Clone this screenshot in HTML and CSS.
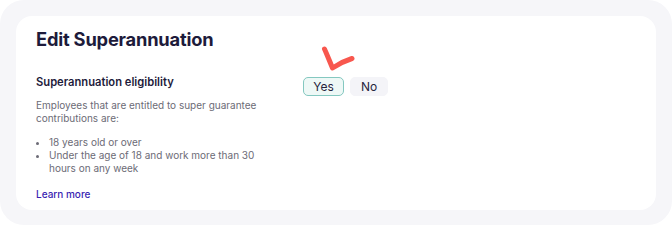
FILE: index.html
```html
<!DOCTYPE html>
<html lang="en">
<head>
<meta charset="utf-8">
<title>Edit Superannuation</title>
<link rel="stylesheet" href="styles.css">
</head>
<body>
<div class="frame">
  <section class="card">
    <h1 class="title">Edit Superannuation</h1>
    <div class="row">
      <div class="info">
        <h2 class="subtitle">Superannuation eligibility</h2>
        <p class="desc">Employees that are entitled to super guarantee contributions are:</p>
        <ul class="list">
          <li>18 years old or over</li>
          <li>Under the age of 18 and work more than 30 hours on any week</li>
        </ul>
        <a class="link" href="#">Learn more</a>
      </div>
      <div class="choice">
        <svg class="check" width="36" height="28" viewBox="0 0 36 28" aria-hidden="true">
          <path d="M3.5 3 C6 8.5 8.5 15 11.5 22 C16 19 23 15 31 12.5" fill="none" stroke="#f8574e" stroke-width="5" stroke-linecap="round" stroke-linejoin="round"/>
        </svg>
        <button class="opt opt-on" type="button">Yes</button>
        <button class="opt" type="button">No</button>
      </div>
    </div>
  </section>
</div>
</body>
</html>
```

FILE: styles.css
```css
* { box-sizing: border-box; }
html, body { margin: 0; background: #ffffff; }
body { font-family: Inter, "Noto Sans", sans-serif; color: #1d1b3b; }

.frame {
  width: 672px;
  height: 225px;
  padding: 16px;
  background: #f6f6f9;
  border-radius: 24px;
}

.card {
  height: 194px;
  background: #ffffff;
  border-radius: 16px;
  padding: 12px 20px 0;
}

.title {
  margin: 0;
  font-size: 18.3px;
  line-height: 22px;
  font-weight: 700;
  letter-spacing: -0.2px;
  color: #1d1b3b;
}

.row {
  display: flex;
  margin-top: 25px;
}

.info { width: 240px; }

.subtitle {
  margin: 0;
  font-size: 11.2px;
  line-height: 14px;
  font-weight: 600;
  color: #1d1b3b;
}

.desc {
  margin: 10px 0 0;
  font-size: 10px;
  line-height: 13px;
  color: #6c6b76;
}

.list {
  margin: 11px 0 0;
  padding-left: 13px;
  font-size: 10px;
  line-height: 13px;
  color: #6c6b76;
}

.link {
  display: block;
  margin-top: 13px;
  font-size: 10px;
  line-height: 13px;
  color: #3a1fb2;
  text-decoration: none;
  font-weight: 500;
}

.choice {
  position: relative;
  display: flex;
  gap: 6px;
  margin-left: 27px;
  margin-top: 2px;
  align-items: flex-start;
}

.check {
  position: absolute;
  left: 18px;
  top: -31px;
}

.opt {
  font-family: inherit;
  height: 19px;
  padding: 0 10px;
  font-size: 12px;
  line-height: 17px;
  font-weight: 400;
  color: #27253d;
  background: #f4f4f8;
  border: 1px solid #f4f4f8;
  border-radius: 5px;
}

.opt-on {
  width: 41px;
  padding: 0;
  background: #eef8f6;
  border-color: #84c8c0;
}
```
